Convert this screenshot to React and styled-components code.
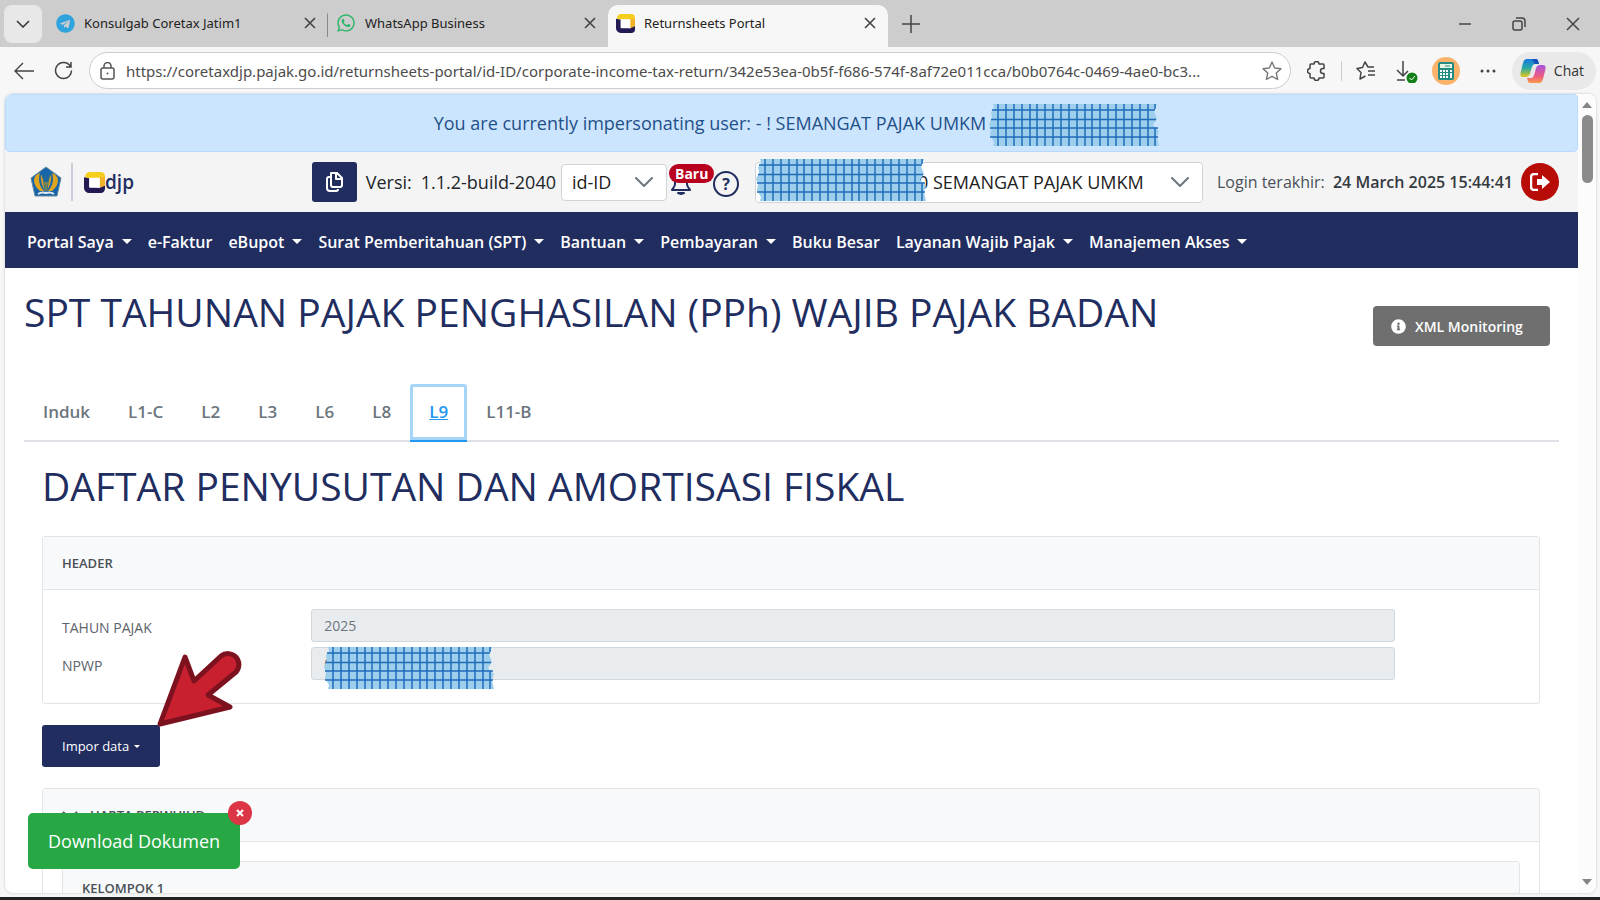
/*
 * Returnsheets portal, corporate income tax return, attachment L9
 */

import React from 'react';
import styled, { createGlobalStyle } from 'styled-components';
import { FaTelegram, FaWhatsapp, FaInfoCircle } from 'react-icons/fa';

const navItems = [
  { label: 'Portal Saya', menu: true },
  { label: 'e-Faktur' },
  { label: 'eBupot', menu: true },
  { label: 'Surat Pemberitahuan (SPT)', menu: true },
  { label: 'Bantuan', menu: true },
  { label: 'Pembayaran', menu: true },
  { label: 'Buku Besar' },
  { label: 'Layanan Wajib Pajak', menu: true },
  { label: 'Manajemen Akses', menu: true },
];

const sheets = ['Induk', 'L1-C', 'L2', 'L3', 'L6', 'L8', 'L9', 'L11-B'];

const pageUrl =
  'https://coretaxdjp.pajak.go.id/returnsheets-portal/id-ID/corporate-income-tax-return/342e53ea-0b5f-f686-574f-8af72e011cca/b0b0764c-0469-4ae0-bc3...';

const CloseIcon = () => (
  <svg width="12" height="12" viewBox="0 0 12 12" stroke="currentColor" strokeWidth="1.6">
    <path d="M1 1l10 10M11 1L1 11" />
  </svg>
);

const ChevronIcon = () => (
  <svg width="18" height="10" viewBox="0 0 18 10" fill="none" stroke="currentColor" strokeWidth="2" strokeLinecap="round" strokeLinejoin="round">
    <path d="M1 1l8 8 8-8" />
  </svg>
);

const CoretaxIcon = ({ size }) => (
  <svg width={size} height={size} viewBox="0 0 20 20">
    <path d="M5 0h11a4 4 0 014 4v11l-5-1V6H5L1 5a5 5 0 014-5z" fill="#f5cf1b" />
    <path d="M15 5h5v8l-5 2z" fill="#f2b32a" />
    <path d="M0 5l5 1v8l10 1 5-2v3a4 4 0 01-4 4H5a5 5 0 01-5-5z" fill="#231a54" />
    <path d="M5 5.500h10v9.500H5z" fill="#fff" />
  </svg>
);

const MinistryIcon = () => (
  <svg width="34" height="32" viewBox="0 0 34 32">
    <path d="M17 1l15 11-4 18H6L2 12z" fill="#1565ad" stroke="#6d8a99" />
    <path d="M5 14c0-3 3-6 6-7-2 6-1 13 4 18h-4c-4-3-6-7-6-11zM29 14c0-3-3-6-6-7 2 6 1 13-4 18h4c4-3 6-7 6-11z" fill="#dfa51f" />
    <path d="M12 8c-1 6 1 12 4 17h2c3-5 5-11 4-17l-3 8h-4z" fill="#c99a2a" />
    <path d="M17 6v19M14 9l2 15M20 9l-2 15" stroke="#2f6f86" />
    <path d="M9 28c3-2 5-2 8-1 3-1 5-1 8 1" fill="none" stroke="#e3e8ec" strokeWidth="2" />
  </svg>
);

// Patterned strip that hides taxpayer numbers
const Tape = () => (
  <svg width="170" height="42" viewBox="0 0 170 42">
    <path
      d="M4 0h164l-3 7 3 8-4 6 6 6-2 6 2 9H4l1-4-4-7 1-6-2-5 3-6-1-6 3-4z"
      fill="#9dcfec"
    />
    <path
      d="M9 0v42M17 0v42M25 0v42M33 0v42M41 0v42M48 0v42M56 0v42M64 0v42M72 0v42M80 0v42M88 0v42M96 0v42M103 0v42M111 0v42M119 0v42M127 0v42M135 0v42M143 0v42M151 0v42M159 0v42M166 0v5M166 24v18"
      stroke="#1c6cba"
      strokeWidth="1.5"
    />
    <path d="M3 6h163M2 15.500h165M1 24h168M1 33h168" stroke="#1c6cba" strokeWidth="1.500" />
  </svg>
);

export default function App() {
  return (
    <Browser>
      <GlobalStyle />
      <TabStrip>
        <TabSearch aria-label="Search tabs">
          <svg width="14" height="8" viewBox="0 0 14 8" fill="none" stroke="currentColor" strokeWidth="1.5">
            <path d="M1 1l6 6 6-6" />
          </svg>
        </TabSearch>
        <BrowserTab $divider>
          <FaTelegram size={19} color="#2ea3dd" />
          <TabTitle>Konsulgab Coretax Jatim1</TabTitle>
          <PlainButton aria-label="Close tab"><CloseIcon /></PlainButton>
        </BrowserTab>
        <BrowserTab>
          <FaWhatsapp size={20} color="#2fb56a" />
          <TabTitle>WhatsApp Business</TabTitle>
          <PlainButton aria-label="Close tab"><CloseIcon /></PlainButton>
        </BrowserTab>
        <BrowserTab $active>
          <CoretaxIcon size={19} />
          <TabTitle>Returnsheets Portal</TabTitle>
          <PlainButton aria-label="Close tab"><CloseIcon /></PlainButton>
        </BrowserTab>
        <NewTab aria-label="New tab">
          <svg width="18" height="18" viewBox="0 0 18 18" stroke="currentColor" strokeWidth="1.5">
            <path d="M9 0v18M0 9h18" />
          </svg>
        </NewTab>
        <WindowControls>
          <PlainButton aria-label="Minimize">
            <svg width="14" height="14" viewBox="0 0 14 14" stroke="currentColor" strokeWidth="1.5"><path d="M1 7h12" /></svg>
          </PlainButton>
          <PlainButton aria-label="Restore">
            <svg width="14" height="14" viewBox="0 0 14 14" fill="none" stroke="currentColor" strokeWidth="1.5">
              <rect x="1" y="4" width="9" height="9" rx="2" />
              <path d="M4 1h6a3 3 0 013 3v6" />
            </svg>
          </PlainButton>
          <PlainButton aria-label="Close">
            <svg width="14" height="14" viewBox="0 0 14 14" stroke="currentColor" strokeWidth="1.5"><path d="M1 1l12 12M13 1L1 13" /></svg>
          </PlainButton>
        </WindowControls>
      </TabStrip>

      <Toolbar>
        <PlainButton aria-label="Back">
          <svg width="20" height="18" viewBox="0 0 20 18" fill="none" stroke="currentColor" strokeWidth="1.4">
            <path d="M20 9H1M9 1L1 9l8 8" />
          </svg>
        </PlainButton>
        <PlainButton aria-label="Reload">
          <svg width="19" height="19" viewBox="0 0 19 19" fill="none" stroke="currentColor" strokeWidth="1.5">
            <path d="M16.500 5.500A8 8 0 109.500 17.500a8 8 0 008-8M17 1v5h-5" />
          </svg>
        </PlainButton>
        <AddressBar>
          <svg width="15" height="18" viewBox="0 0 15 18" fill="none" stroke="#555" strokeWidth="1.5">
            <rect x="1" y="6" width="13" height="11" rx="2" />
            <path d="M4 6V4a3.500 3.500 0 017 0v2" />
            <circle cx="7.500" cy="11.500" r="1" fill="#555" stroke="none" />
          </svg>
          <Address aria-label="Address" defaultValue={pageUrl} />
          <PlainButton aria-label="Add to favorites">
            <svg width="20" height="20" viewBox="0 0 20 20" fill="none" stroke="#777" strokeWidth="1.4" strokeLinejoin="round">
              <path d="M10 1l2.700 6 6.300.7-4.700 4.400 1.300 6.400-5.600-3.200-5.600 3.200 1.300-6.400L1 7.700 7.300 7z" />
            </svg>
          </PlainButton>
        </AddressBar>
        <PlainButton aria-label="Extensions">
          <svg width="20" height="20" viewBox="0 0 20 20" fill="none" stroke="currentColor" strokeWidth="1.500" strokeLinejoin="round">
            <path d="M4 3h3a2.500 2.500 0 015 0h4a1 1 0 011 1v3.500h-1a2.500 2.500 0 000 5h1V16a1 1 0 01-1 1h-4a2.500 2.500 0 01-5 0H4a1 1 0 01-1-1v-3.500a2.500 2.500 0 010-5V4a1 1 0 011-1z" />
          </svg>
        </PlainButton>
        <ToolDivider />
        <PlainButton aria-label="Favorites">
          <svg width="20" height="19" viewBox="0 0 20 19" fill="none" stroke="currentColor" strokeWidth="1.500" strokeLinejoin="round">
            <path d="M18 6h-6L9 1 6.500 6.500 1 7.500l4 4-1 6.500 5.500-3M12 10h7M12 14h7" />
          </svg>
        </PlainButton>
        <PlainButton aria-label="Downloads">
          <svg width="22" height="24" viewBox="0 0 22 24" fill="none">
            <path d="M7 2v15M1 11l6 6 5-5M1 21h8" stroke="#444" strokeWidth="1.500" />
            <circle cx="16" cy="19" r="5.500" fill="#128017" />
            <path d="M13.500 19l2 2 3.500-4" stroke="#fff" />
          </svg>
        </PlainButton>
        <ProfileButton aria-label="Profile">
          <svg width="28" height="28" viewBox="0 0 28 28">
            <circle cx="14" cy="14" r="14" fill="#fbb36c" />
            <rect x="6" y="5" width="16" height="18" rx="2" fill="#258b82" />
            <path d="M8 7h12v4H8z" fill="#e5f6e5" />
            <path d="M13 9h5" stroke="#258b82" />
            <path d="M8 14h8M8 17h8M8 20h8" stroke="#fff" strokeWidth="2" strokeDasharray="2 1" />
            <path d="M19 13v8" stroke="#fff" strokeWidth="2" strokeDasharray="2 1 5" />
          </svg>
        </ProfileButton>
        <PlainButton aria-label="More">
          <svg width="16" height="4" viewBox="0 0 16 4" fill="currentColor">
            <circle cx="2" cy="2" r="1.500" /><circle cx="8" cy="2" r="1.500" /><circle cx="14" cy="2" r="1.500" />
          </svg>
        </PlainButton>
        <ChatButton>
          <svg width="26" height="24" viewBox="0 0 26 24">
            <defs>
              <linearGradient id="copilotLeft" x1="0" y1="0" x2="0" y2="1">
                <stop offset="0" stopColor="#1678e0" />
                <stop offset=".5" stopColor="#27a9a5" />
                <stop offset="1" stopColor="#e8c819" />
              </linearGradient>
              <linearGradient id="copilotRight" x1="0" y1="0" x2="0" y2="1">
                <stop offset="0" stopColor="#a653e0" />
                <stop offset=".6" stopColor="#ed5a85" />
                <stop offset="1" stopColor="#fb9a4b" />
              </linearGradient>
            </defs>
            <path d="M7 0h9c2 0 2 2 3 5h-4c-2 0-3 2-4 6l-1 4c-1 2-2 3-4 3H3c-3 0-3-3-2-6l2-8c1-3 2-4 4-4z" fill="url(#copilotLeft)" />
            <path d="M19 24h-9c-2 0-2-2-3-5h4c2 0 3-2 4-6l1-4c1-2 2-3 4-3h3c3 0 3 3 2 6l-2 8c-1 3-2 4-4 4z" fill="url(#copilotRight)" />
            <path d="M12 0h4c2 0 2 2 3 5h-4z" fill="#1750b8" />
          </svg>
          Chat
        </ChatButton>
      </Toolbar>

      <Viewport>
        <Page>
          <Banner>
            You are currently impersonating user: - ! SEMANGAT PAJAK UMKM 0
            <BannerTape><Tape /></BannerTape>
          </Banner>

          <Header>
            <Brand>
              <MinistryIcon />
              <BrandDivider />
              <CoretaxIcon size={21} />
              <BrandName>djp</BrandName>
            </Brand>
            <CopyButton aria-label="Copy version">
              <svg width="17" height="20" viewBox="0 0 17 20" fill="none" stroke="#fff" strokeWidth="2" strokeLinejoin="round">
                <path d="M5 1h6l5 5v7a2 2 0 01-2 2H7a2 2 0 01-2-2zM10 1v6h6M4 5H3a2 2 0 00-2 2v9a3 3 0 003 3h6a2 2 0 002-2" />
              </svg>
            </CopyButton>
            <Version>
              <span>Versi:</span>
              <span>1.1.2-build-2040</span>
            </Version>
            <SelectWrap $width="106px">
              <Select aria-label="Bahasa" defaultValue="id-ID" $height="37px">
                <option>id-ID</option>
              </Select>
              <SelectArrow><ChevronIcon /></SelectArrow>
            </SelectWrap>
            <Alerts>
              <PlainButton aria-label="Notifikasi">
                <svg width="22" height="26" viewBox="0 0 22 26" fill="none" stroke="#212d5f" strokeWidth="2" strokeLinejoin="round">
                  <path d="M5 15V9a6 6 0 0112 0v6c0 3 2 4 3 6H2c1-2 3-3 3-6z" />
                  <path d="M8 24h6l-3 1z" />
                </svg>
              </PlainButton>
              <NewBadge>Baru</NewBadge>
            </Alerts>
            <HelpButton aria-label="Bantuan">?</HelpButton>
            <SelectWrap $width="448px">
              <Select aria-label="Wajib pajak" defaultValue="user" $height="41px" $indent="162px">
                <option value="user">0 SEMANGAT PAJAK UMKM</option>
              </Select>
              <SelectArrow><ChevronIcon /></SelectArrow>
              <SelectTape><Tape /></SelectTape>
            </SelectWrap>
            <LastLogin>
              Login terakhir: <strong>24 March 2025 15:44:41</strong>
            </LastLogin>
            <LogoutButton aria-label="Keluar">
              <svg width="21" height="18" viewBox="0 0 21 18">
                <path d="M8 1H4a3 3 0 00-3 3v10a3 3 0 003 3h4" fill="none" stroke="#fff" strokeWidth="2.500" />
                <path d="M7 6h5V2l8 7-8 7v-4H7z" fill="#fff" />
              </svg>
            </LogoutButton>
          </Header>

          <Nav>
            {navItems.map(item => (
              <NavLink key={item.label} href="#">
                {item.label}
                {item.menu && <Caret />}
              </NavLink>
            ))}
          </Nav>

          <Content>
            <TitleRow>
              <Heading as="h1">SPT TAHUNAN PAJAK PENGHASILAN (PPh) WAJIB PAJAK BADAN</Heading>
              <XmlButton>
                <FaInfoCircle size={15} />
                XML Monitoring
              </XmlButton>
            </TitleRow>

            <SheetTabs>
              {sheets.map(sheet => (
                <SheetTab key={sheet} href="#" $active={sheet === 'L9'}>
                  {sheet}
                </SheetTab>
              ))}
            </SheetTabs>

            <Sheet>
              <Heading>DAFTAR PENYUSUTAN DAN AMORTISASI FISKAL</Heading>
              <Card>
                <CardHeader>HEADER</CardHeader>
                <CardBody>
                  <Field>
                    <FieldLabel htmlFor="year">TAHUN PAJAK</FieldLabel>
                    <FieldInput id="year" readOnly value="2025" />
                  </Field>
                  <Field>
                    <FieldLabel htmlFor="npwp">NPWP</FieldLabel>
                    <FieldInput id="npwp" readOnly value="0" />
                    <FieldTape><Tape /></FieldTape>
                  </Field>
                </CardBody>
              </Card>

              <ImportWrap>
                <ImportButton>
                  Impor data
                  <Caret $small />
                </ImportButton>
                <Pointer width="90" height="82" viewBox="0 0 90 82">
                  <path
                    d="M4 77L29 10l9 24 27-25a11 11 0 0115 16L52 48l22 12z"
                    fill="#c9202f"
                    stroke="#7d121f"
                    strokeWidth="5"
                    strokeLinejoin="round"
                  />
                </Pointer>
              </ImportWrap>

              <Card>
                <CardHeader>
                  <svg width="16" height="9" viewBox="0 0 16 9" fill="none" stroke="currentColor" strokeWidth="2">
                    <path d="M1 1l7 7 7-7" />
                  </svg>
                  HARTA BERWUJUD
                </CardHeader>
                <CardBody>
                  <Card>
                    <CardHeader>KELOMPOK 1</CardHeader>
                  </Card>
                </CardBody>
              </Card>
            </Sheet>
          </Content>
        </Page>

        <Scrollbar>
          <ScrollArrow />
          <ScrollThumb />
          <ScrollArrow $down />
        </Scrollbar>

        <Download>
          <DownloadButton>Download Dokumen</DownloadButton>
          <DownloadClose aria-label="Tutup">
            <svg width="8" height="8" viewBox="0 0 8 8" stroke="#fff" strokeWidth="2"><path d="M1 1l6 6M7 1L1 7" /></svg>
          </DownloadClose>
        </Download>
      </Viewport>
      <Taskbar />
    </Browser>
  );
}

const GlobalStyle = createGlobalStyle`
  * {
    box-sizing: border-box;
  }
  body {
    margin: 0;
    font-family: 'Open Sans', 'Noto Sans', sans-serif;
    font-size: 14px;
    color: #212529;
  }
  button, input, select {
    font-family: inherit;
  }
  svg {
    display: block;
    flex: none;
  }
`;

const Browser = styled.div`
  display: flex;
  flex-direction: column;
  height: 100vh;
  overflow: hidden;
  background: #f7f7f7;
`;

const PlainButton = styled.button`
  flex: none;
  padding: 0;
  border: 0;
  background: none;
  color: #444;
`;

const TabStrip = styled.div`
  display: flex;
  align-items: flex-end;
  flex: none;
  height: 47px;
  padding-left: 4px;
  background: #cdcdcd;
`;

const TabSearch = styled.button`
  display: flex;
  align-items: center;
  justify-content: center;
  width: 38px;
  height: 38px;
  margin: 0 6px 4px 0;
  padding: 0;
  border: 0;
  border-radius: 8px;
  background: #e8e8e8;
  color: #333;
`;

const BrowserTab = styled.div`
  display: flex;
  align-items: center;
  gap: 9px;
  width: 280px;
  height: 42px;
  padding: 0 12px 6px 8px;
  border-radius: 10px 10px 0 0;
  background: ${props => {
    if (props.$active) return '#f7f7f7';
    if (props.$divider) return 'linear-gradient(#888, #888) right 8px / 1px 24px no-repeat';
    return 'none';
  }};
`;

const TabTitle = styled.span`
  flex: 1;
  font-family: 'Noto Sans', sans-serif;
  font-size: 13px;
  white-space: nowrap;
  color: #222;
`;

const NewTab = styled(PlainButton)`
  margin: 0 0 14px 14px;
`;

const WindowControls = styled.div`
  display: flex;
  gap: 40px;
  margin: 0 20px 16px auto;
`;

const Toolbar = styled.div`
  display: flex;
  align-items: center;
  gap: 20px;
  flex: none;
  height: 47px;
  padding-left: 14px;
`;

const AddressBar = styled.div`
  display: flex;
  align-items: center;
  gap: 11px;
  flex: 1;
  height: 37px;
  margin: 0 -4px;
  padding: 0 8px 0 10px;
  border: 1px solid #ccc;
  border-radius: 19px;
  background: #fff;
`;

const Address = styled.input`
  flex: 1;
  min-width: 0;
  padding: 0;
  border: 0;
  outline: 0;
  font-family: 'Noto Sans', sans-serif;
  font-size: 15px;
  color: #4c4c4c;
`;

const ToolDivider = styled.div`
  width: 1px;
  height: 20px;
  margin: 0 -6px;
  background: #ccc;
`;

const ProfileButton = styled(PlainButton)`
  margin-left: -6px;
`;

const ChatButton = styled.button`
  display: flex;
  align-items: center;
  gap: 8px;
  height: 38px;
  margin: 0 4px 0 -4px;
  padding: 0 12px 0 8px;
  border: 0;
  border-radius: 19px;
  background: #e9e9e9;
  font-size: 14px;
  color: #333;
`;

const Viewport = styled.div`
  position: relative;
  display: flex;
  flex: 1;
  min-height: 0;
  margin: 0 4px 4px 5px;
  overflow: hidden;
  border-radius: 8px;
  background: #fff;
  box-shadow: 0 0 3px rgba(0, 0, 0, 0.2);
`;

const Page = styled.div`
  flex: 1;
  min-width: 0;
`;

const Banner = styled.div`
  display: flex;
  align-items: center;
  justify-content: center;
  height: 58px;
  padding-left: 10px;
  border: 1px solid #b8daff;
  border-radius: 4px;
  background: #cce5ff;
  font-size: 18px;
  color: #1f5088;
`;

const BannerTape = styled.div`
  margin: 4px 0 0 -12px;
`;

const Header = styled.header`
  display: flex;
  align-items: center;
  height: 60px;
  padding: 0 19px 0 24px;
  background: #f4f4f4;
`;

const Brand = styled.div`
  display: flex;
  align-items: center;
  margin-right: auto;
`;

const BrandDivider = styled.div`
  width: 2px;
  height: 38px;
  margin: 0 11px 0 8px;
  background: #cdccd8;
`;

const BrandName = styled.span`
  font-size: 19px;
  font-weight: 600;
  line-height: 24px;
  color: #212d5f;
`;

const CopyButton = styled.button`
  display: flex;
  align-items: center;
  justify-content: center;
  width: 45px;
  height: 40px;
  padding: 0;
  border: 0;
  border-radius: 3px;
  background: #212d5f;
`;

const Version = styled.div`
  display: flex;
  gap: 9px;
  margin: 0 5px 0 9px;
  font-size: 18px;
  white-space: nowrap;
`;

const SelectWrap = styled.div`
  position: relative;
  width: ${props => props.$width};
`;

const Select = styled.select`
  display: block;
  width: 100%;
  height: ${props => props.$height};
  padding: 0 40px 0 ${props => props.$indent || '10px'};
  appearance: none;
  border: 1px solid #ced4da;
  border-radius: 4px;
  background: #fff;
  font-size: 18px;
  color: #222;
`;

const SelectArrow = styled.span`
  position: absolute;
  right: 14px;
  top: 50%;
  margin-top: -5px;
  color: #6c757d;
  pointer-events: none;
`;

const SelectTape = styled.div`
  position: absolute;
  left: 1px;
  top: -3px;
`;

const Alerts = styled.div`
  position: relative;
  margin: 4px 21px 0 3px;
`;

const NewBadge = styled.span`
  position: absolute;
  left: -1px;
  top: -5px;
  padding: 0 6px;
  border-radius: 10px;
  background: #b8001f;
  font-size: 14px;
  font-weight: 700;
  line-height: 19px;
  color: #fff;
`;

const HelpButton = styled.button`
  width: 26px;
  height: 26px;
  margin: 4px 16px 0 0;
  padding: 0;
  border: 2px solid #212d5f;
  border-radius: 50%;
  background: none;
  font-size: 16px;
  font-weight: 700;
  line-height: 20px;
  color: #212d5f;
`;

const LastLogin = styled.div`
  margin: 0 8px 0 14px;
  font-size: 16px;
  white-space: nowrap;
  color: #495057;

  strong {
    margin-left: 4px;
    font-weight: 600;
    color: #343a40;
  }
`;

const LogoutButton = styled.button`
  display: flex;
  align-items: center;
  justify-content: center;
  width: 38px;
  height: 38px;
  padding: 0;
  border: 0;
  border-radius: 50%;
  background: #b80c09;
`;

const Nav = styled.nav`
  display: flex;
  align-items: center;
  gap: 16px;
  height: 56px;
  padding: 3px 22px 0;
  background: #212d5f;
`;

const NavLink = styled.a`
  display: flex;
  align-items: center;
  gap: 8px;
  font-size: 16px;
  font-weight: 600;
  white-space: nowrap;
  text-decoration: none;
  color: #fff;
`;

const Caret = styled.span`
  border: ${props => (props.$small ? 3 : 5)}px solid transparent;
  border-top-color: currentColor;
  border-bottom: 0;
`;

const Content = styled.main`
  padding: 0 19px;
`;

const TitleRow = styled.div`
  display: flex;
  align-items: flex-start;
  justify-content: space-between;
  padding: 16px 9px 0 0;
`;

const Heading = styled.h2`
  margin: 0;
  font-size: 39px;
  font-weight: 400;
  line-height: 56px;
  color: #212d5f;
`;

const XmlButton = styled.button`
  display: flex;
  align-items: center;
  gap: 9px;
  width: 177px;
  height: 40px;
  margin-top: 22px;
  padding: 0 18px;
  border: 0;
  border-radius: 4px;
  background: #6f6f6f;
  font-size: 14px;
  font-weight: 600;
  color: #fff;
`;

const SheetTabs = styled.div`
  display: flex;
  margin-top: 38px;
  border-bottom: 2px solid #dee2e6;
`;

const SheetTab = styled.a`
  height: 58px;
  margin-bottom: -2px;
  padding: 0 19px;
  border-bottom: 2px solid ${props => (props.$active ? '#2196f3' : 'transparent')};
  box-shadow: ${props => (props.$active ? 'inset 0 0 0 3px #a6d5fa' : 'none')};
  border-radius: 3px 3px 0 0;
  font-size: 17px;
  font-weight: 600;
  line-height: 56px;
  text-decoration: ${props => (props.$active ? 'underline' : 'none')};
  color: ${props => (props.$active ? '#2196f3' : '#6c757d')};
`;

const Sheet = styled.section`
  padding: 16px 19px 18px 18px;
`;

const Card = styled.div`
  border: 1px solid #e1e5e8;
  border-radius: 3px;

  h2 + & {
    margin-top: 22px;
  }
`;

const CardHeader = styled.div`
  display: flex;
  align-items: center;
  gap: 12px;
  height: 53px;
  padding: 0 19px;
  border-bottom: 1px solid #e3e7ea;
  background: #f8f9fa;
  font-size: 13px;
  font-weight: 600;
  color: #495057;
`;

const CardBody = styled.div`
  display: grid;
  gap: 5px;
  padding: 19px 19px 23px;
`;

const Field = styled.div`
  position: relative;
  display: grid;
  grid-template-columns: 20fr 87fr 10fr;
  align-items: center;
`;

const FieldLabel = styled.label`
  padding-top: 4px;
  color: #5c636a;
`;

const FieldInput = styled.input`
  width: 100%;
  height: 33px;
  padding: 0 12px;
  border: 1px solid #d3d8dd;
  border-radius: 3px;
  background: #e9ecef;
  font-size: 14px;
  color: #6c757d;
`;

const FieldTape = styled.div`
  position: absolute;
  left: 262px;
  top: 0;
`;

const ImportWrap = styled.div`
  position: relative;
  width: max-content;
  margin: 21px 0;
`;

const ImportButton = styled.button`
  display: flex;
  align-items: center;
  gap: 5px;
  height: 42px;
  padding: 0 20px;
  border: 0;
  border-radius: 3px;
  background: #212d5f;
  font-size: 13px;
  color: #fff;
`;

const Pointer = styled.svg`
  position: absolute;
  left: 114px;
  bottom: 38px;
`;

const Scrollbar = styled.div`
  display: flex;
  flex-direction: column;
  align-items: center;
  width: 18px;
  padding: 8px 0;
  background: #fcfcfc;
`;

const ScrollArrow = styled.span`
  margin-top: ${props => (props.$down ? 'auto' : 0)};
  border: 5px solid transparent;
  border-top: ${props => (props.$down ? '6px solid #858585' : 0)};
  border-bottom: ${props => (props.$down ? 0 : '6px solid #858585')};
`;

const ScrollThumb = styled.div`
  width: 11px;
  height: 68px;
  margin-top: 7px;
  border-radius: 6px;
  background: #8b8b8b;
`;

const Download = styled.div`
  position: absolute;
  left: 23px;
  bottom: 24px;
`;

const DownloadButton = styled.button`
  height: 56px;
  padding: 0 20px;
  border: 0;
  border-radius: 5px;
  background: #28a745;
  font-size: 18px;
  color: #fff;
`;

const DownloadClose = styled.button`
  position: absolute;
  right: -12px;
  top: -12px;
  display: flex;
  align-items: center;
  justify-content: center;
  width: 24px;
  height: 24px;
  padding: 0;
  border: 0;
  border-radius: 50%;
  background: #dc3545;
`;

const Taskbar = styled.div`
  flex: none;
  height: 3px;
  background: #222;
`;
